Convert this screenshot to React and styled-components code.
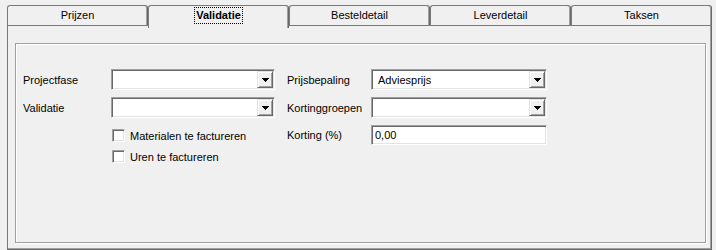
import React from 'react';
import styled, { createGlobalStyle } from 'styled-components';

const Global = createGlobalStyle`
  body {
    margin: 0;
    background: #f0f0f0;
    font-family: "Liberation Sans", Arial, sans-serif;
    font-size: 11px;
    color: #000;
  }
`;

const Frame = styled.div`
  width: 716px;
  height: 250px;
  box-sizing: border-box;
  padding: 5px 4px 0 7px;
  display: flex;
  flex-direction: column;
`;

const TabStrip = styled.div`
  display: flex;
  height: 20px;
  position: relative;
  z-index: 1;
`;

const Tab = styled.div`
  width: 141px;
  box-sizing: border-box;
  height: ${(p) => (p.$active ? '23px' : '20px')};
  background: #f0f0f0;
  border-top: 1px solid #7a7a7a;
  border-left: 1px solid #7a7a7a;
  border-right: 1px solid #696969;
  box-shadow: inset -1px 0 0 #a0a0a0;
  border-top-left-radius: 3px;
  border-top-right-radius: 3px;
  display: flex;
  justify-content: center;
  padding-top: ${(p) => (p.$active ? '3px' : '3px')};
  font-weight: ${(p) => (p.$active ? 'bold' : 'normal')};
`;

const Focus = styled.span`
  outline: 1px dotted #000;
  outline-offset: 1px;
  height: 13px;
  line-height: 13px;
`;

const Panel = styled.div`
  flex: 1;
  box-sizing: border-box;
  border-top: 1px solid #7a7a7a;
  border-left: 1px solid #7a7a7a;
  border-right: 1px solid #696969;
  border-bottom: 1px solid #696969;
  box-shadow: inset -1px -1px 0 #a0a0a0;
  padding: 17px 5px 6px 7px;
  display: flex;
`;

const GroupBox = styled.div`
  flex: 1;
  border: 1px solid #a0a0a0;
  box-shadow: inset 1px 1px 0 #fff, 1px 1px 0 #fff;
  padding: 25px 7px 0 7px;
  display: flex;
  align-items: flex-start;
  gap: 12px;
`;

const FieldGrid = styled.div`
  display: grid;
  grid-template-columns: ${(p) => p.$label}px ${(p) => p.$field}px;
  grid-auto-rows: auto;
  row-gap: 7px;
  align-items: center;
`;

const Label = styled.div`
  white-space: nowrap;
`;

const Sunken = styled.div`
  box-sizing: border-box;
  height: ${(p) => p.$h || 21}px;
  background: #fff;
  border: 1px solid;
  border-color: #a0a0a0 #fff #fff #a0a0a0;
  box-shadow: inset 1px 1px 0 #696969, inset -1px -1px 0 #e3e3e3;
  padding: 1px;
  display: flex;
  align-items: center;
`;

const Value = styled.div`
  flex: 1;
  padding-left: ${(p) => p.$pad}px;
  white-space: nowrap;
`;

const DropButton = styled.div`
  width: 16px;
  height: 17px;
  box-sizing: border-box;
  background: #f0f0f0;
  border: 1px solid;
  border-color: #e3e3e3 #696969 #696969 #e3e3e3;
  box-shadow: inset 1px 1px 0 #fff, inset -1px -1px 0 #a0a0a0;
  display: flex;
  align-items: center;
  justify-content: center;
`;

const CheckRow = styled.label`
  grid-column: 2;
  display: flex;
  align-items: center;
  gap: 5px;
  padding-left: 1px;
  margin-top: ${(p) => p.$top}px;
  height: 13px;
`;

const CheckBox = styled.span`
  width: 13px;
  height: 13px;
  box-sizing: border-box;
  background: #fff;
  border: 1px solid;
  border-color: #a0a0a0 #fff #fff #a0a0a0;
  box-shadow: inset 1px 1px 0 #696969, inset -1px -1px 0 #e3e3e3;
`;

function Combo({ value }) {
  return (
    <Sunken>
      <Value $pad={5}>{value}</Value>
      <DropButton>
        <svg width="7" height="4" viewBox="0 0 7 4" shapeRendering="crispEdges">
          <path d="M0 0h7v1H0zM1 1h5v1H1zM2 2h3v1H2zM3 3h1v1H3z" fill="#000" />
        </svg>
      </DropButton>
    </Sunken>
  );
}

const tabs = ['Prijzen', 'Validatie', 'Besteldetail', 'Leverdetail', 'Taksen'];

export default function App() {
  return (
    <>
      <Global />
      <Frame>
        <TabStrip>
          {tabs.map((t) =>
            t === 'Validatie' ? (
              <Tab key={t} $active>
                <Focus>{t}</Focus>
              </Tab>
            ) : (
              <Tab key={t}>{t}</Tab>
            )
          )}
        </TabStrip>
        <Panel>
          <GroupBox>
            <FieldGrid $label={88} $field={164}>
              <Label>Projectfase</Label>
              <Combo />
              <Label>Validatie</Label>
              <Combo />
              <CheckRow $top={4}>
                <CheckBox />
                Materialen te factureren
              </CheckRow>
              <CheckRow $top={1}>
                <CheckBox />
                Uren te factureren
              </CheckRow>
            </FieldGrid>
            <FieldGrid $label={84} $field={176}>
              <Label>Prijsbepaling</Label>
              <Combo value="Adviesprijs" />
              <Label>Kortinggroepen</Label>
              <Combo />
              <Label>Korting (%)</Label>
              <Sunken $h={20}>
                <Value $pad={2}>0,00</Value>
              </Sunken>
            </FieldGrid>
          </GroupBox>
        </Panel>
      </Frame>
    </>
  );
}
